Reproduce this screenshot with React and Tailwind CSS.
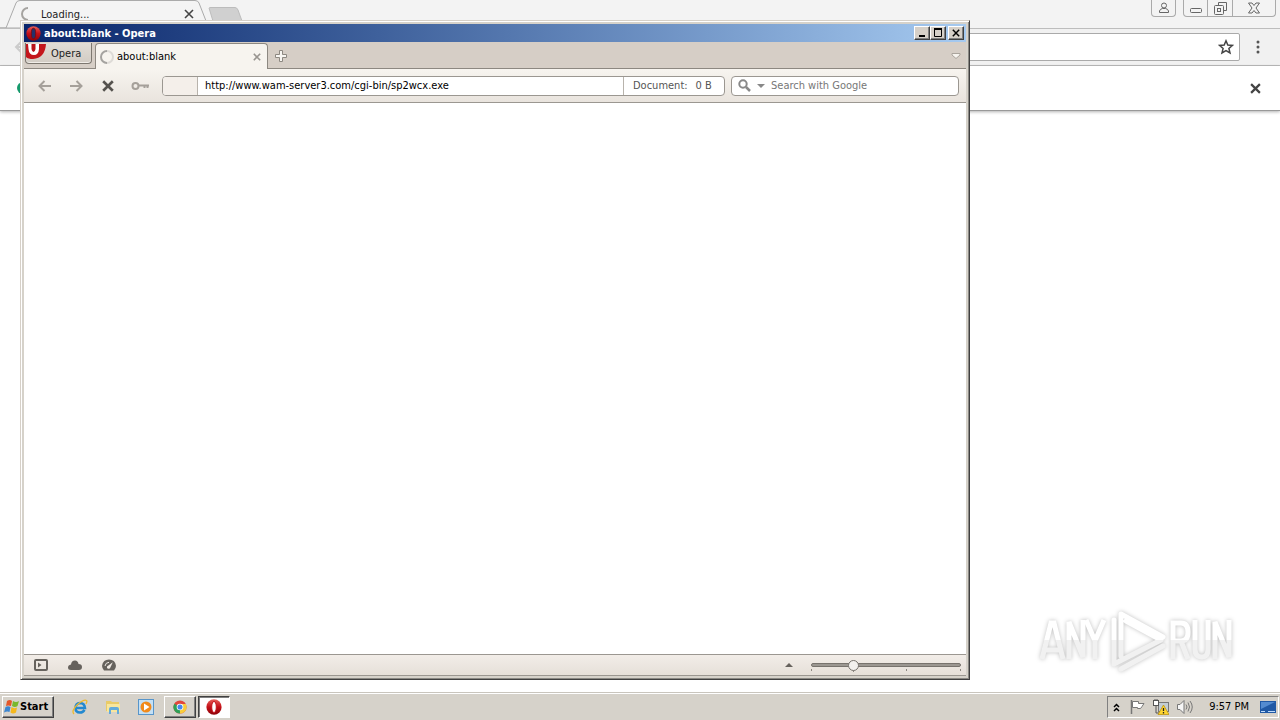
import React from "react";

const ui = "font-['DejaVu_Sans_Condensed','Noto_Sans',sans-serif]";

function Cross({ className, width = 2 }) {
  return (
    <svg viewBox="0 0 10 10" className={className} fill="none" stroke="currentColor" strokeWidth={width} aria-hidden="true">
      <path d="M1 1 L9 9 M9 1 L1 9" />
    </svg>
  );
}

function Spinner({ className, faded = "#dedbd7", track = "M8 2 A6 6 0 0 1 8 14" }) {
  return (
    <svg viewBox="0 0 16 16" className={className} fill="none" aria-hidden="true">
      <path d={track} stroke={faded} strokeWidth="2" />
      <path d="M8 14 A6 6 0 0 1 8 2" stroke="#a5a3a0" strokeWidth="2" />
    </svg>
  );
}

function OperaLogo({ className, hole = "#fff", ring = "#c41018" }) {
  return (
    <svg viewBox="0 0 16 16" className={className} aria-hidden="true">
      <defs>
        <linearGradient id="operaRed" x1="0" y1="0" x2="0" y2="1">
          <stop offset="0" stopColor="#e8605a" />
          <stop offset="0.5" stopColor="#c41018" />
          <stop offset="1" stopColor="#8c0308" />
        </linearGradient>
      </defs>
      <ellipse cx="8" cy="8" rx="7.6" ry="7.8" fill="url(#operaRed)" />
      <ellipse cx="8" cy="8" rx="2.3" ry="5.6" fill={hole} stroke={ring} strokeWidth="1" />
    </svg>
  );
}

function ChromeWindow() {
  return (
    <section aria-label="Chrome" className="flex flex-1 flex-col bg-white">
      <header className="flex h-7 items-start justify-between bg-[#f3f3f3]">
        <div className="flex h-full">
          <div className="relative flex h-full w-[208px] items-center pl-5">
            <svg viewBox="0 0 208 28" className="absolute inset-0 h-full w-full" aria-hidden="true">
              <path d="M0 28 H6 L16 3 Q17 .5 20 .5 H195 Q198 .5 199 3 L208 26 V28Z" fill="#f4f4f4" stroke="#aaa" />
            </svg>
            <Spinner className="relative h-4 w-4" faded="none" />
            <span className="relative ml-[5px] flex-1 pt-px text-[11px] leading-7 text-[#222]">Loading...</span>
            <button aria-label="Close tab" className="relative mr-[14px] text-[#444]"><Cross className="h-[10px] w-[10px]" width={1.6} /></button>
          </div>
          <button aria-label="New tab" className="mt-[7px] h-[14px] w-[34px]">
            <svg viewBox="0 0 34 14" className="h-full w-full"><path d="M1 1 Q1 .5 3 .5 H27 Q29 .5 30 3 L34 14 H5Z" fill="#d0d0d0" stroke="#bcbcbc" /></svg>
          </button>
        </div>
        <div className="flex pr-1 text-[#666]">
          <button aria-label="Profile" className="mr-[7px] flex h-[17px] w-[25px] items-center justify-center rounded-b border border-t-0 border-[#aaa]">
            <svg viewBox="0 0 12 12" className="h-3 w-3" fill="none" stroke="currentColor"><circle cx="6" cy="3.5" r="2.5" /><path d="M1.500 10.500 V9 Q2 7 4.500 6.500 H7.500 Q10 7 10.500 9 V10.500Z" /></svg>
          </button>
          <div className="flex h-[17px] divide-x divide-[#aaa] rounded-b border border-t-0 border-[#aaa]">
            <button aria-label="Minimize Chrome" className="flex w-6 items-center justify-center">
              <svg viewBox="0 0 12 12" className="h-3 w-3" fill="none" stroke="currentColor"><rect x=".5" y="6.500" width="11" height="4" rx="1" /></svg>
            </button>
            <button aria-label="Restore Chrome" className="flex w-[25px] items-center justify-center">
              <svg viewBox="0 0 13 13" className="h-[13px] w-[13px]" fill="none" stroke="currentColor"><path d="M4.500 3.500 V.5 H12.500 V8.500 H9.500" /><rect x=".5" y="3.500" width="9" height="9" rx="1" /><rect x="3.500" y="6.500" width="3" height="3" /></svg>
            </button>
            <button aria-label="Close Chrome" className="flex w-[42px] items-center justify-center">
              <svg viewBox="0 0 12 12" className="h-3 w-3" fill="none" stroke="currentColor"><path d="M.5 1 H4 L6 3.500 L8 1 H11.500 L8 6 L11.500 11 H8 L6 8.500 L4 11 H.5 L4 6Z" /></svg>
            </button>
          </div>
        </div>
      </header>
      <div className="flex h-[38px] items-center gap-[9px] border-y border-[#bdbdbd] bg-[#f1f1f1] pr-[13px] pl-[14px]">
        <button aria-label="Back" className="text-[#ccc]">
          <svg viewBox="0 0 16 16" className="h-4 w-4" fill="none" stroke="currentColor" strokeWidth="2"><path d="M15 8 H2 M8 2 L2 8 L8 14" /></svg>
        </button>
        <div className="flex h-7 flex-1 items-center rounded-[2px] border border-[#aaa] bg-white pr-[5px]">
          <input aria-label="Chrome address" className="h-full min-w-0 flex-1 outline-none" />
          <button aria-label="Bookmark" className="text-[#444]">
            <svg viewBox="0 0 16 16" className="h-4 w-4" fill="none" stroke="currentColor" strokeWidth="1.500"><path d="M8 1.800 L9.800 6 L14.400 6.400 L10.900 9.400 L12 13.900 L8 11.500 L4 13.900 L5.100 9.400 L1.600 6.400 L6.200 6Z" /></svg>
          </button>
        </div>
        <button aria-label="Chrome menu" className="flex w-[18px] justify-center text-[#555]">
          <svg viewBox="0 0 4 14" className="h-[14px] w-1" fill="currentColor"><circle cx="2" cy="2" r="1.500" /><circle cx="2" cy="7" r="1.500" /><circle cx="2" cy="12" r="1.500" /></svg>
        </button>
      </div>
      <div className="flex h-[45px] items-center justify-between border-b border-[#999] pr-[19px] pl-[17px] shadow-[0_1px_3px_rgba(0,0,0,0.3)]">
        <span className="h-3 w-3 rounded-full bg-[#159a6c]" />
        <button aria-label="Dismiss message" className="text-[#444]"><Cross className="h-[11px] w-[11px]" /></button>
      </div>
    </section>
  );
}

function CaptionButton({ label, children }) {
  return (
    <button aria-label={label} className="flex h-[14px] w-4 items-center justify-center border border-t-white border-r-[#404040] border-b-[#404040] border-l-white bg-[#d6d0c8] text-black shadow-[inset_-1px_-1px_0_#808080]">
      {children}
    </button>
  );
}

function OperaWindow() {
  return (
    <section aria-label="Opera" className="absolute top-5 right-[310px] bottom-3 left-5 flex flex-col border border-t-[#d6d0c8] border-r-[#404040] border-b-[#404040] border-l-[#d6d0c8] bg-[#d6d2ca] p-[3px] shadow-[inset_1px_1px_0_#fff,inset_-1px_-1px_0_#8a8883]">
      <header className="flex h-[18px] items-center bg-linear-to-r from-[#0a246a] to-[#a6caf0] pr-[2px] pl-[2px] text-white">
        <OperaLogo className="h-[15px] w-[15px]" hole="#24316b" ring="#7c0a12" />
        <h1 className="ml-[3px] flex-1 pt-px text-[11px] leading-4 font-bold">about:blank - Opera</h1>
        <CaptionButton label="Minimize"><svg viewBox="0 0 8 8" className="h-2 w-2"><path d="M1 7 H7" stroke="currentColor" strokeWidth="2" /></svg></CaptionButton>
        <CaptionButton label="Maximize"><svg viewBox="0 0 10 10" className="h-[10px] w-[10px]"><path d="M1 1 H9" stroke="currentColor" strokeWidth="2" /><path d="M1.500 1 V8.500 H8.500 V1" fill="none" stroke="currentColor" /></svg></CaptionButton>
        <span className="w-[2px]" />
        <CaptionButton label="Close"><Cross className="h-2 w-2" width={1.8} /></CaptionButton>
      </header>
      <div className="flex h-[27px] items-end border-b border-[#8d8881] bg-[#d6cec6]">
        <button className="mb-1 ml-px flex h-[21px] w-[67px] items-start rounded-b-[4px] border border-t-0 border-[#7d7870] bg-linear-to-b from-[#e2ddd6] to-[#d2ccc4] pt-px text-[11px] text-[#222] shadow-[inset_0_-1px_0_#f1ede8]">
          <svg viewBox="0 0 20 16" className="h-4 w-5" aria-hidden="true">
            <path d="M0 0 H20 Q19 14 7 15 Q2 15 0 13Z" fill="#c4161c" />
            <path d="M2 0 H13 V5 Q12.500 11 8 11 Q3 11 2.500 5Z" fill="#fff" />
            <path d="M5.500 0 H9.500 V5 Q9 8 7.500 8 Q6 8 5.500 5Z" fill="#b9141a" />
          </svg>
          <span className="ml-[5px] leading-5">Opera</span>
        </button>
        <div className="-mb-px ml-[3px] flex h-[26px] w-[173px] items-center rounded-t-[4px] border border-b-0 border-[#8d8881] bg-[#f7f4ef] pr-[6px] pl-[3px]">
          <Spinner className="h-4 w-4" />
          <span className="ml-[2px] flex-1 pt-[2px] text-[11px] text-black">about:blank</span>
          <button aria-label="Close about:blank" className="text-[#999590]"><Cross className="h-2 w-2" /></button>
        </div>
        <button aria-label="New Opera tab" className="mb-[5px] ml-[6px]">
          <svg viewBox="0 0 14 14" className="h-[14px] w-[14px]"><path d="M5.500 1.500 H8.500 V5.500 H12.500 V8.500 H8.500 V12.500 H5.500 V8.500 H1.500 V5.500 H5.500Z" fill="#f8f6f2" stroke="#8d8881" /></svg>
        </button>
        <button aria-label="Closed tabs" className="mr-[5px] mb-2 ml-auto">
          <svg viewBox="0 0 10 8" className="h-2 w-[10px]"><path d="M1 1.500 H9 V3 L5 6.500 L1 3Z" fill="#f7f4ef" stroke="#aaa49c" /></svg>
        </button>
      </div>
      <div className="flex h-[34px] items-center border-b border-[#9b9791] bg-linear-to-b from-[#f7f4ef] to-[#e9e4de] pr-[7px] pl-[13px]">
        <nav aria-label="Navigation" className="flex items-center gap-4 text-[#a5a09a]">
          <button aria-label="Opera back"><svg viewBox="0 0 16 12" className="h-3 w-4" fill="none" stroke="currentColor" strokeWidth="2"><path d="M14 6 H3 M7.500 1 L2.500 6 L7.500 11" /></svg></button>
          <button aria-label="Opera forward" className="-ml-px"><svg viewBox="0 0 16 12" className="h-3 w-4" fill="none" stroke="currentColor" strokeWidth="2"><path d="M2 6 H13 M8.500 1 L13.500 6 L8.500 11" /></svg></button>
          <button aria-label="Stop" className="px-[2px] text-[#55524e]"><Cross className="h-3 w-3" width={2.2} /></button>
          <button aria-label="Passwords" className="-ml-px"><svg viewBox="0 0 18 10" className="h-[10px] w-[18px]" fill="none" stroke="currentColor" strokeWidth="2"><circle cx="4.500" cy="5" r="3" /><path d="M8 4.500 H18 M13.500 4.500 V7 M16.500 4.500 V7" /></svg></button>
        </nav>
        <div className="ml-[13px] flex h-5 flex-1 items-stretch overflow-hidden rounded-[4px] border border-[#9b9791] bg-white text-[11px]">
          <span className="w-[35px] border-r border-[#b8b3ac] bg-[#f4efea]" />
          <input aria-label="Address" className="min-w-0 flex-1 px-[7px] pt-[2px] text-black outline-none" defaultValue="http://www.wam-server3.com/cgi-bin/sp2wcx.exe" />
          <div className="flex w-[101px] items-center gap-2 border-l border-[#b8b3ac] pt-[2px] pl-[9px] text-[#555]"><span>Document:</span><span>0 B</span></div>
        </div>
        <label className="ml-[6px] flex h-5 w-[228px] items-center rounded-[4px] border border-[#9b9791] bg-white pl-[6px] text-[11px] text-[#888]">
          <svg viewBox="0 0 13 13" className="h-[13px] w-[13px]" fill="none" stroke="currentColor" strokeWidth="2"><circle cx="5" cy="5" r="3.700" /><path d="M8 8 L12 12" strokeWidth="2.500" /></svg>
          <svg viewBox="0 0 8 4" className="ml-[6px] h-1 w-2"><path d="M0 0 H8 L4 4Z" fill="currentColor" /></svg>
          <input aria-label="Search" placeholder="Search with Google" className="ml-[6px] min-w-0 flex-1 pt-[2px] outline-none placeholder:text-[#777]" />
        </label>
      </div>
      <main className="flex-1 bg-white" />
      <footer className="flex h-[22px] items-center border-y border-[#9b9791] bg-linear-to-b from-[#f2ede8] to-[#e6e0d9] pr-[5px] pl-[10px] text-[#66625d]">
        <div className="flex items-center gap-5">
          <button aria-label="Panels"><svg viewBox="0 0 14 12" className="h-3 w-[14px]"><rect x="1" y="1" width="12" height="10" rx="1" fill="none" stroke="currentColor" strokeWidth="2" /><path d="M4 3.500 L7.500 6 L4 8.500Z" fill="currentColor" /></svg></button>
          <button aria-label="Opera Link"><svg viewBox="0 0 14 12" className="h-3 w-[14px]" fill="currentColor"><path d="M3 11 Q0 11 0 8.500 Q0 6 3 5.500 Q3.500 1.500 7 1.500 Q10 1.500 10.500 5 Q14 5 14 8 Q14 11 11 11Z" /></svg></button>
          <button aria-label="Opera Turbo"><svg viewBox="0 0 14 12" className="h-3 w-[14px]"><path d="M2 11.500 Q0 9 0 6.800 Q1 .5 7 .5 Q13 .5 14 6.800 Q14 9 12 11.500Z" fill="currentColor" /><path d="M3 7 Q3.500 3.500 7 3.300" fill="none" stroke="#efeae4" /><path d="M5 7.500 L10.800 3.300 L8 9.200 Q6 10.500 5 9Z" fill="#efeae4" /></svg></button>
        </div>
        <button aria-label="Zoom menu" className="mr-[18px] ml-auto"><svg viewBox="0 0 8 4" className="h-1 w-2"><path d="M4 0 L8 4 H0Z" fill="currentColor" /></svg></button>
        <div className="relative flex h-4 w-[150px] items-center">
          <svg viewBox="0 0 150 16" className="absolute inset-0 h-full w-full" aria-hidden="true"><path d="M.5 12 V14 M42.500 13 V15 M95.500 12 V14 M149.500 12 V14" stroke="#8d8881" /></svg>
          <input type="range" aria-label="Zoom" min="0" max="100" defaultValue="26" className="relative h-1 w-full appearance-none rounded-full border border-[#77736d] bg-[#9b9791] [&::-webkit-slider-thumb]:h-[11px] [&::-webkit-slider-thumb]:w-[11px] [&::-webkit-slider-thumb]:appearance-none [&::-webkit-slider-thumb]:rounded-full [&::-webkit-slider-thumb]:border [&::-webkit-slider-thumb]:border-[#77736d] [&::-webkit-slider-thumb]:bg-[#f3f1ee]" />
        </div>
      </footer>
    </section>
  );
}

function Watermark() {
  return (
    <div className="absolute right-[46px] bottom-5 drop-shadow-[0_0_2px_rgba(0,0,0,0.25)]">
      <svg viewBox="0 0 196 64" className="h-16 w-[196px]" role="img" aria-label="ANY RUN">
        <defs>
          <linearGradient id="mark" gradientUnits="userSpaceOnUse" x1="0" y1="0" x2="0" y2="64">
            <stop offset="0.5" stopColor="#fff" />
            <stop offset="0.5" stopColor="#f1f1f1" />
          </linearGradient>
        </defs>
        <g fill="none" stroke="url(#mark)" strokeWidth="5" strokeLinejoin="miter">
          <path d="M4 51 L13 15 H16 L25 51 M8 42 H21" />
          <path d="M31 51 V14 L45 49 V12" />
          <path d="M48 12 L57 33 L66 12 M57 33 V51" />
          <path d="M135 51 V15 H143 Q150 15 150 24 Q150 33 143 33 H135 M143 33 L150 51" />
          <path d="M157 12 V41 Q157 49 164 49 Q170 49 170 41 V12" />
          <path d="M177 51 V14 L191 49 V12" />
        </g>
        <g fill="none" stroke="url(#mark)" strokeWidth="5" strokeLinejoin="round" strokeLinecap="round">
          <path d="M83 48 V6 L125 29 M76 12 V56 L123 32 L88 13 M83 61 L125 38" />
        </g>
      </svg>
    </div>
  );
}

function Taskbar() {
  return (
    <footer className="flex h-[28px] items-center border-t border-[#c9c5bd] bg-[#d6d2ca] pt-px pl-[2px] text-[11px] text-black shadow-[inset_0_1px_0_#fff]">
      <button className="flex h-[22px] w-[52px] items-center border border-t-white border-r-[#404040] border-b-[#404040] border-l-white pl-px font-bold shadow-[inset_-1px_-1px_0_#808080]">
        <svg viewBox="0 0 16 16" className="h-4 w-4" aria-hidden="true"><path d="M3 2 Q6 0 8 2 L7 7 Q4 6 2 7Z" fill="#e4582a" /><path d="M9 2 Q12 4 15 2 L13.500 7 Q11 9 8 7Z" fill="#7ab82e" /><path d="M1.500 8 Q4 6.500 6.500 8 L5.500 13 Q3 12 0 13.500Z" fill="#3b86d0" /><path d="M7.500 8 Q10 10 13 8.500 L12 13.500 Q9 15.500 6.500 13.500Z" fill="#f5b81c" /></svg>
        <span className="pt-px">Start</span>
      </button>
      <nav aria-label="Quick launch" className="ml-[18px] flex items-center gap-[17px]">
        <button aria-label="Internet Explorer"><svg viewBox="0 0 16 16" className="h-4 w-4" fill="none"><path d="M12.500 10.800 Q11 13.500 8 13.500 Q3.500 13.500 3.500 9 Q3.500 4.500 8 4 Q12.500 4 13 9 H4" stroke="#2389d0" strokeWidth="2.500" /><path d="M2 15 Q-1 12 5 6 Q12 0 14.500 1.500 Q15.500 2 14 5" stroke="#eeb92b" strokeWidth="1.300" /></svg></button>
        <button aria-label="Explorer"><svg viewBox="0 0 16 16" className="h-4 w-4"><path d="M1 2 H6 L7 3 H14 V12 H1Z" fill="#e9cb68" /><path d="M2 5 H15 V13 H2Z" fill="#f8e69d" /><path d="M4 15 V10 Q4 8 6 8 H12 Q14 8 14 10 V15 H12 V11 H6 V15Z" fill="#62abdb" /></svg></button>
        <button aria-label="Media Player"><svg viewBox="0 0 16 16" className="h-4 w-4"><rect x=".5" y=".5" width="15" height="15" fill="#c4e0f5" stroke="#5795ca" /><circle cx="8" cy="8" r="5.500" fill="#f18a1b" /><path d="M6 4.500 L11.500 8 L6 11.500Z" fill="#fff" /></svg></button>
      </nav>
      <button aria-label="Chrome window" className="ml-[10px] flex h-[22px] w-8 items-center justify-center border border-t-white border-r-[#404040] border-b-[#404040] border-l-white shadow-[inset_-1px_-1px_0_#808080]">
        <svg viewBox="0 0 16 16" className="h-[14px] w-[14px]"><circle cx="8" cy="8" r="7.500" fill="#e2473c" /><path d="M8 8 L1.500 4.200 A7.500 7.500 0 0 0 8 15.500 L11 10Z" fill="#2fa057" /><path d="M8 8 V4.500 H14.700 A7.500 7.500 0 0 1 8 15.500Z" fill="#f9cd3b" /><circle cx="8" cy="8" r="3.800" fill="#fff" /><circle cx="8" cy="8" r="2.900" fill="#4688ed" /></svg>
      </button>
      <button aria-label="Opera window" className="ml-[2px] flex h-[22px] w-8 items-center justify-center border border-t-[#404040] border-r-white border-b-white border-l-[#404040] bg-white shadow-[inset_1px_1px_0_#808080]"><OperaLogo className="h-4 w-4" /></button>
      <div className="ml-auto flex h-[22px] items-center border border-t-[#808080] border-r-white border-b-white border-l-[#808080] pr-[2px] pl-[5px]">
        <button aria-label="Show hidden icons"><svg viewBox="0 0 7 9" className="h-[9px] w-[7px]" fill="none" stroke="currentColor" strokeWidth="1.500"><path d="M1 4 L3.500 1.500 L6 4 M1 8 L3.500 5.500 L6 8" /></svg></button>
        <div className="ml-[9px] flex items-center gap-2">
          <button aria-label="Action Center"><svg viewBox="0 0 16 16" className="h-4 w-4"><path d="M2.500 1 V15" stroke="#777" strokeWidth="1.500" /><path d="M3.500 2.500 H9.500 V4.500 H15 L13 7.500 L11.500 9.500 H8.500 V8.500 H3.500Z" fill="#fff" stroke="#777" /></svg></button>
          <button aria-label="Network"><svg viewBox="0 0 16 16" className="h-4 w-4"><rect x="5.500" y="3.500" width="10" height="9" fill="#c3cdd4" stroke="#777" /><rect x=".5" y="1.500" width="5" height="5" fill="#fff" stroke="#555" /><path d="M2 0 V2 M4 0 V2 M3 6 V14 H7" fill="none" stroke="#555" /><path d="M10.500 6 L16 15.500 H5Z" fill="#ffd530" stroke="#b98d00" strokeWidth=".7" /><path d="M10.500 9 V12 M10.500 13 V14.500" stroke="#222" strokeWidth="1.300" /></svg></button>
          <button aria-label="Volume"><svg viewBox="0 0 16 16" className="h-4 w-4" fill="none" stroke="#777"><path d="M.5 5.500 H3 L7 1.500 V14.500 L3 10.500 H.5Z" fill="#f6f6f6" /><path d="M9 5.500 Q11 8 9 10.500 M11 3.500 Q14 8 11 12.500 M13 2 Q17.500 8 13 14" /></svg></button>
        </div>
        <time className="ml-4 pt-px">9:57 PM</time>
        <button aria-label="Show desktop" className="ml-[11px]"><svg viewBox="0 0 16 12" className="h-3 w-4"><rect width="16" height="12" fill="#2059a5" /><path d="M1 1 H15 L1 8Z" fill="#538bd0" /><path d="M1 10.500 H5 M8 10.500 H15" stroke="#bddafa" /></svg></button>
      </div>
      <span className="w-px" />
    </footer>
  );
}

export default function App() {
  return (
    <div className={`flex min-h-screen flex-col overflow-hidden bg-white ${ui}`}>
      <div className="relative flex flex-1 flex-col">
        <ChromeWindow />
        <Watermark />
        <OperaWindow />
      </div>
      <Taskbar />
    </div>
  );
}
